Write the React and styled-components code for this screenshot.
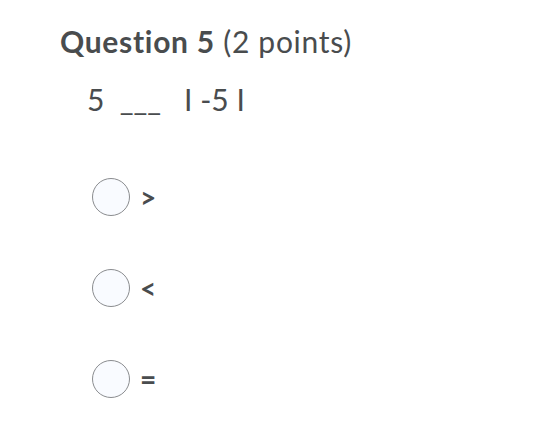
import React from "react";
import styled, { createGlobalStyle } from "styled-components";

const Global = createGlobalStyle`
  html, body { margin: 0; padding: 0; background: #fff; }
  body { font-family: Lato, "Open Sans", sans-serif; color: #494c4e; font-variant-ligatures: none; }
`;

const Page = styled.div`
  width: 534px;
  height: 428px;
  box-sizing: border-box;
  padding: 23px 0 0 60px;
`;

const Title = styled.h2`
  margin: 0;
  font-size: 30px;
  line-height: 36px;
  font-weight: 400;
  letter-spacing: 0.7px;
  color: #494c4e;
`;

const Strong = styled.span`
  font-weight: 700;
`;

const Prompt = styled.div`
  margin: 23px 0 0 27px;
  font-size: 30px;
  line-height: 34px;
  white-space: pre;
`;

const Options = styled.div`
  display: flex;
  flex-direction: column;
  gap: 53px;
  margin: 62px 0 0 32px;
`;

const Option = styled.label`
  display: flex;
  align-items: center;
  gap: 10px;
  height: 38px;
`;

const Radio = styled.span`
  width: 36px;
  height: 36px;
  border-radius: 50%;
  border: 1px solid #8a8c8f;
  background: #f9fbff;
  flex: none;
`;

const OptionText = styled.span`
  font-size: 28px;
  font-weight: 700;
  color: #494c4e;
`;

export default function App() {
  const opts = [">", "<", "="];
  return (
    <>
      <Global />
      <Page>
        <Title>
          <Strong>Question 5</Strong> (2 points)
        </Title>
        <Prompt>{"5  ___   I -5 I"}</Prompt>
        <Options>
          {opts.map((o) => (
            <Option key={o}>
              <Radio />
              <OptionText>{o}</OptionText>
            </Option>
          ))}
        </Options>
      </Page>
    </>
  );
}
